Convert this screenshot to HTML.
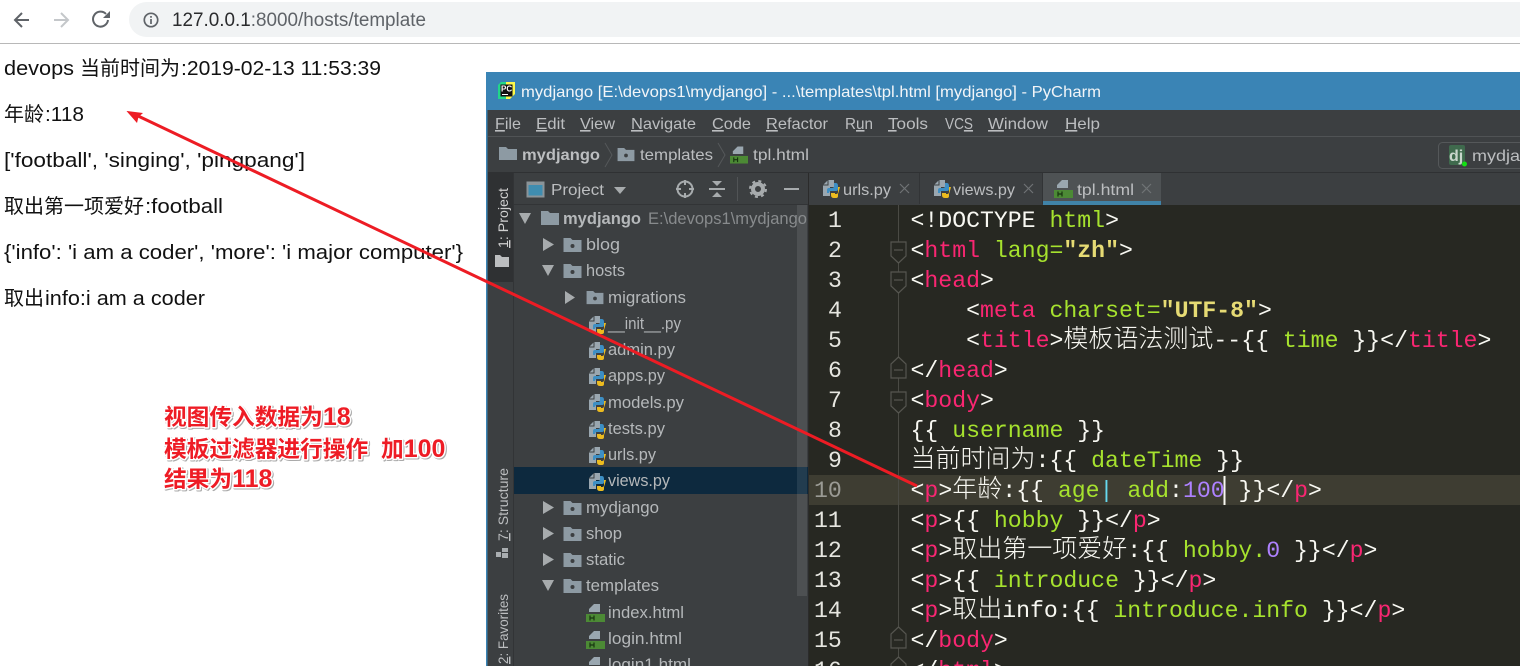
<!DOCTYPE html>
<html lang="zh"><head><meta charset="utf-8"><title>template</title>
<style>
html,body{margin:0;padding:0;background:#fff;width:1520px;height:666px;overflow:hidden}
svg{display:block}
text{white-space:pre}
.b{font:20px "Liberation Sans","Noto Sans CJK SC",sans-serif;fill:#111}
.c{font:20px "Noto Sans CJK SC","Liberation Sans",sans-serif;fill:#111}
.u{font:16px "Liberation Sans","Noto Sans CJK SC",sans-serif;fill:#bcbec0}
.t{font:17px "Liberation Sans",sans-serif;fill:#b5b8ba}
.m{font:23.17px "Liberation Mono","Noto Sans CJK SC",monospace;fill:#f8f8f2}
.m .k{font-size:25px;font-family:"Noto Sans CJK SC",sans-serif;font-weight:300}
.p{fill:#f92672}.g{fill:#a6e22e}.y{fill:#e6db74;font-weight:bold}.v{fill:#ae81ff}.a{fill:#66d9ef}
.n{font:23.17px "Liberation Mono",monospace;fill:#e6e6e0}
.r{font:bold 22.7px "Noto Sans CJK SC","Liberation Sans",sans-serif;fill:#ee1c25;stroke:#fff;stroke-width:3px;paint-order:stroke;stroke-linejoin:round;filter:drop-shadow(1px 1px 0 #aaa)}
.r .d{font:bold 25px "Liberation Sans",sans-serif}
.s{font:14px "Liberation Sans",sans-serif;fill:#bcbec0}
</style></head><body>
<svg width="1520" height="666" viewBox="0 0 1520 666" xmlns="http://www.w3.org/2000/svg">
<defs>
<symbol id="py" viewBox="0 0 18 20"><path d="M1 6 6 1h6v7H8v9H1z" fill="#9aa7b0"/><path d="M6 1v5H1" fill="none" stroke="#3c3f41"/><path d="M6 13v-3q0-2 2-2h3q2 0 2-2V3h2q2 0 2 3v3q0 2-2 2h-5q-2 0-2 2z" transform="translate(-1 1)" fill="#3d8fc4"/><path d="M17 9v5q0 2-2 2h-1v-1H10v2q0 3 3 3h2q2 0 2-2v-2q1-3 2-7z" transform="translate(-1 -1)" fill="#ecbb1f"/></symbol>
<symbol id="ht" viewBox="0 0 19 20"><path d="M3 9V6l5-5h6v8z" fill="#9aa7b0"/><rect x="0" y="11" width="19" height="8" fill="#4c8a35"/><path d="M4 12.5v5M8 12.5v5M4 15h4" stroke="#173510" stroke-width="1.2"/></symbol>
<symbol id="fo" viewBox="0 0 18 16"><path d="M0 1h7l2 2h9v12H0z" fill="#8d9aa3"/><circle cx="9" cy="9" r="2" fill="#3c3f41"/></symbol>
</defs>

<rect x="0" y="0" width="1520" height="43" fill="#fff"/>
<rect x="0" y="43" width="1520" height="1" fill="#b8b8b8"/>
<path d="M129 19.5A17.5 17.5 0 0 1 146.5 2H1520V37H146.5A17.5 17.5 0 0 1 129 19.5z" fill="#f1f3f4"/>
<path d="M29 20H15M22 13l-7 7 7 7" fill="none" stroke="#5f6368" stroke-width="2"/>
<path d="M54 20h14M61 13l7 7-7 7" fill="none" stroke="#c4c7ca" stroke-width="2"/>
<path d="M108 20a7.500 7.500 0 1 1-2-6" fill="none" stroke="#5f6368" stroke-width="2"/><path d="M110 11v7h-7z" fill="#5f6368"/>
<circle cx="151" cy="20" r="6.700" fill="none" stroke="#5f6368" stroke-width="1.700"/><path d="M151 19v5M151 16v1.700" stroke="#5f6368" stroke-width="1.700"/>
<text x="172" y="26" font-family="Liberation Sans" font-size="19" fill="#5f6368" textLength="254" lengthAdjust="spacingAndGlyphs"><tspan fill="#2a2b2d">127.0.0.1</tspan>:8000/hosts/template</text>

<text class="b" x="4" y="75" textLength="70" lengthAdjust="spacingAndGlyphs">devops</text>
<text class="c" x="80" y="75">当前时间为</text>
<text class="b" x="181" y="75" textLength="200" lengthAdjust="spacingAndGlyphs">:2019-02-13 11:53:39</text>
<text class="c" x="4" y="121">年龄</text><text class="b" x="45" y="121" textLength="39" lengthAdjust="spacingAndGlyphs">:118</text>
<text class="b" x="4" y="167" textLength="301" lengthAdjust="spacingAndGlyphs">['football', 'singing', 'pingpang']</text>
<text class="c" x="4" y="213">取出第一项爱好</text><text class="b" x="145" y="213" textLength="78" lengthAdjust="spacingAndGlyphs">:football</text>
<text class="b" x="4" y="259" textLength="459" lengthAdjust="spacingAndGlyphs">{'info': 'i am a coder', 'more': 'i major computer'}</text>
<text class="c" x="4" y="305">取出</text><text class="b" x="45" y="305" textLength="160" lengthAdjust="spacingAndGlyphs">info:i am a coder</text>

<text class="r" x="164" y="425">视图传入数据为<tspan class="d">18</tspan></text>
<text class="r" x="164" y="457">模板过滤器进行操作<tspan x="381">加</tspan><tspan class="d">100</tspan></text>
<text class="r" x="164" y="487">结果为<tspan class="d">118</tspan></text>

<rect x="486" y="72" width="1034" height="594" fill="#3c3f41"/>
<rect x="486" y="72" width="1034" height="38" fill="#3a84b5"/>
<rect x="486" y="72" width="1.500" height="594" fill="#3a84b5"/>
<path d="M498 85l3-3h9v17h-12z" fill="#21d789"/><path d="M506 82h9v12l-5 5h-4z" fill="#fcf84a"/><rect x="500.500" y="84.500" width="12" height="12" fill="#111"/>
<text x="501" y="91.500" font-family="Liberation Sans" font-weight="bold" font-size="8" fill="#fff">PC</text><rect x="502" y="94" width="6" height="1" fill="#fff"/>
<text x="521" y="97" font-family="Liberation Sans" font-size="16" fill="#f2f5f8" textLength="580" lengthAdjust="spacingAndGlyphs">mydjango [E:\devops1\mydjango] - ...\templates\tpl.html [mydjango] - PyCharm</text>

<rect x="488" y="136" width="1032" height="1" fill="#505355"/>
<g class="menu">
<text class="u" x="495" y="129" textLength="26" lengthAdjust="spacingAndGlyphs"><tspan text-decoration="underline">F</tspan>ile</text>
<text class="u" x="536" y="129" textLength="29" lengthAdjust="spacingAndGlyphs"><tspan text-decoration="underline">E</tspan>dit</text>
<text class="u" x="580" y="129" textLength="35" lengthAdjust="spacingAndGlyphs"><tspan text-decoration="underline">V</tspan>iew</text>
<text class="u" x="631" y="129" textLength="65" lengthAdjust="spacingAndGlyphs"><tspan text-decoration="underline">N</tspan>avigate</text>
<text class="u" x="712" y="129" textLength="39" lengthAdjust="spacingAndGlyphs"><tspan text-decoration="underline">C</tspan>ode</text>
<text class="u" x="766" y="129" textLength="62" lengthAdjust="spacingAndGlyphs"><tspan text-decoration="underline">R</tspan>efactor</text>
<text class="u" x="845" y="129" textLength="28" lengthAdjust="spacingAndGlyphs">R<tspan text-decoration="underline">u</tspan>n</text>
<text class="u" x="888" y="129" textLength="40" lengthAdjust="spacingAndGlyphs"><tspan text-decoration="underline">T</tspan>ools</text>
<text class="u" x="945" y="129" textLength="28" lengthAdjust="spacingAndGlyphs">VC<tspan text-decoration="underline">S</tspan></text>
<text class="u" x="988" y="129" textLength="60" lengthAdjust="spacingAndGlyphs"><tspan text-decoration="underline">W</tspan>indow</text>
<text class="u" x="1065" y="129" textLength="35" lengthAdjust="spacingAndGlyphs"><tspan text-decoration="underline">H</tspan>elp</text>
</g>

<path d="M499 147h7l2 2h9v11h-18z" fill="#8d9aa3"/>
<text class="u" x="522" y="160" style="font-weight:bold" textLength="78" lengthAdjust="spacingAndGlyphs">mydjango</text>
<path d="M605 143l7 12-7 12" fill="none" stroke="#55585a"/>
<use href="#fo" x="617" y="147" width="18" height="15"/>
<text class="u" x="640" y="160" textLength="73" lengthAdjust="spacingAndGlyphs">templates</text>
<path d="M718 143l7 12-7 12" fill="none" stroke="#55585a"/>
<use href="#ht" x="730" y="145" width="18" height="20"/>
<text class="u" x="753" y="160" textLength="56" lengthAdjust="spacingAndGlyphs">tpl.html</text>
<rect x="1438.500" y="142.500" width="100" height="26" rx="4" fill="none" stroke="#55585a"/>
<rect x="1449" y="145" width="16" height="20" rx="2" fill="#3f6a4d"/><text x="1449" y="161" font-family="Liberation Sans" font-weight="bold" font-size="16" fill="#c9d6cc">dj</text><circle cx="1464.500" cy="164" r="2.500" fill="#13e013"/>
<text class="u" x="1472" y="161" textLength="58" lengthAdjust="spacingAndGlyphs">mydjan</text>

<rect x="488" y="172" width="1032" height="1" fill="#2f3133"/>

<rect x="488" y="173" width="25.500" height="109" fill="#2f3133"/>
<rect x="513" y="173" width="1" height="493" fill="#323436"/>
<text class="s" transform="translate(508 248) rotate(-90)" style="fill:#d0d0d0" textLength="60" lengthAdjust="spacingAndGlyphs"><tspan text-decoration="underline">1</tspan>: Project</text>
<path d="M495 255h5l2 2h7v10h-14z" fill="#bcbec0"/>
<text class="s" transform="translate(508 541) rotate(-90)" textLength="73" lengthAdjust="spacingAndGlyphs"><tspan text-decoration="underline">7</tspan>: Structure</text>
<path d="M496 552h5v5h-5zM502 548h6v4h-6zM502 553h6v5h-6z" fill="#a9adb0"/>
<text class="s" transform="translate(508 664) rotate(-90)" textLength="70" lengthAdjust="spacingAndGlyphs"><tspan text-decoration="underline">2</tspan>: Favorites</text>

<rect x="527.500" y="182.500" width="16" height="14" fill="#3f8db0" stroke="#8b9499" stroke-width="2"/><rect x="528" y="182" width="16" height="3" fill="#8b9499"/>
<text class="u" x="551" y="195" textLength="53" lengthAdjust="spacingAndGlyphs">Project</text>
<path d="M614 187h12l-6 7z" fill="#a7abad"/>
<circle cx="685" cy="189" r="7.500" fill="none" stroke="#a7abad" stroke-width="2"/><path d="M676 189h5M689 189h5M685 180v5M685 193v5" stroke="#a7abad" stroke-width="2"/>
<path d="M709 189h16" stroke="#a7abad" stroke-width="2"/><path d="M712 181h10l-5 5zM712 197h10l-5-5z" fill="#a7abad"/>
<rect x="737" y="177" width="1" height="24" fill="#515456"/>
<circle cx="758" cy="189" r="5" fill="none" stroke="#a7abad" stroke-width="4"/><circle cx="758" cy="189" r="8" fill="none" stroke="#a7abad" stroke-width="2" stroke-dasharray="3 3.300"/>
<path d="M784 189h15" stroke="#a7abad" stroke-width="2"/>

<rect x="514" y="204" width="295" height="1" fill="#323436"/>
<rect x="514" y="467" width="294" height="27" fill="#0d293e"/>
<rect x="797" y="205" width="10" height="391" fill="#ffffff" fill-opacity=".09"/>

<path d="M519 213h12l-6 11zM542 265h12l-6 11zM542 580h12l-6 11z" fill="#a7abad"/>
<path d="M543 238l11 6.500-11 6.500zM543 501l11 6.500-11 6.500zM543 527l11 6.500-11 6.500zM543 553l11 6.500-11 6.500zM565 291l10 6.500-10 6.500z" fill="#a7abad"/>
<path d="M541 211h7l2 2h9v12h-18z" fill="#8d9aa3"/>
<use href="#fo" x="563" y="237" width="19" height="16"/><use href="#fo" x="563" y="263" width="19" height="16"/><use href="#fo" x="586" y="290" width="18" height="15"/>
<use href="#fo" x="563" y="500" width="19" height="16"/><use href="#fo" x="563" y="526" width="19" height="16"/><use href="#fo" x="563" y="552" width="19" height="16"/><use href="#fo" x="563" y="578" width="19" height="16"/>
<use href="#py" x="588" y="315" width="18" height="20"/><use href="#py" x="588" y="341" width="18" height="20"/><use href="#py" x="588" y="367" width="18" height="20"/><use href="#py" x="588" y="393" width="18" height="20"/><use href="#py" x="588" y="420" width="18" height="20"/><use href="#py" x="588" y="446" width="18" height="20"/><use href="#py" x="588" y="472" width="18" height="20"/>
<use href="#ht" x="586" y="603" width="19" height="20"/><use href="#ht" x="586" y="630" width="19" height="20"/><use href="#ht" x="586" y="656" width="19" height="20"/>

<text class="t" x="563" y="224" style="font-weight:bold" textLength="78" lengthAdjust="spacingAndGlyphs">mydjango</text>
<text class="t" x="648" y="224" style="fill:#888b8d" textLength="159" lengthAdjust="spacingAndGlyphs">E:\devops1\mydjango</text>
<text class="t" x="586" y="250" textLength="34" lengthAdjust="spacingAndGlyphs">blog</text>
<text class="t" x="586" y="276" textLength="39" lengthAdjust="spacingAndGlyphs">hosts</text>
<text class="t" x="608" y="303" textLength="78" lengthAdjust="spacingAndGlyphs">migrations</text>
<text class="t" x="608" y="329" textLength="73" lengthAdjust="spacingAndGlyphs">__init__.py</text>
<text class="t" x="608" y="355" textLength="67" lengthAdjust="spacingAndGlyphs">admin.py</text>
<text class="t" x="608" y="381" textLength="57" lengthAdjust="spacingAndGlyphs">apps.py</text>
<text class="t" x="608" y="408" textLength="76" lengthAdjust="spacingAndGlyphs">models.py</text>
<text class="t" x="608" y="434" textLength="57" lengthAdjust="spacingAndGlyphs">tests.py</text>
<text class="t" x="608" y="460" textLength="48" lengthAdjust="spacingAndGlyphs">urls.py</text>
<text class="t" x="608" y="486" textLength="62" lengthAdjust="spacingAndGlyphs">views.py</text>
<text class="t" x="586" y="513" textLength="73" lengthAdjust="spacingAndGlyphs">mydjango</text>
<text class="t" x="586" y="539" textLength="36" lengthAdjust="spacingAndGlyphs">shop</text>
<text class="t" x="586" y="565" textLength="39" lengthAdjust="spacingAndGlyphs">static</text>
<text class="t" x="586" y="591" textLength="73" lengthAdjust="spacingAndGlyphs">templates</text>
<text class="t" x="608" y="618" textLength="76" lengthAdjust="spacingAndGlyphs">index.html</text>
<text class="t" x="608" y="644" textLength="74" lengthAdjust="spacingAndGlyphs">login.html</text>
<text class="t" x="608" y="670" textLength="83" lengthAdjust="spacingAndGlyphs">login1.html</text>

<rect x="809" y="173" width="711" height="32" fill="#3c3f41"/>
<rect x="919" y="173" width="1" height="31" fill="#323436"/><rect x="1042" y="173" width="1" height="31" fill="#323436"/>
<rect x="1043" y="173" width="118" height="28" fill="#4e5254"/><rect x="1043" y="201" width="118" height="4" fill="#4083a8"/>
<use href="#py" x="822" y="179" width="18" height="20"/><use href="#py" x="933" y="179" width="18" height="20"/><use href="#ht" x="1054" y="179" width="19" height="20"/>
<text class="u" x="843" y="195" textLength="48" lengthAdjust="spacingAndGlyphs">urls.py</text>
<text class="u" x="953" y="195" textLength="62" lengthAdjust="spacingAndGlyphs">views.py</text>
<text class="u" x="1077" y="195" textLength="57" lengthAdjust="spacingAndGlyphs">tpl.html</text>
<path d="M900 184l9 9M909 184l-9 9M1024 184l9 9M1033 184l-9 9M1142 184l9 9M1151 184l-9 9" stroke="#6f7375" stroke-width="1.200"/>

<rect x="809" y="205" width="711" height="461" fill="#272822"/>
<rect x="808" y="173" width="1" height="493" fill="#2b2b2b"/>
<rect x="809" y="475" width="711" height="30" fill="#3e3d32"/>
<rect x="898" y="205" width="1" height="461" fill="#4a4a44"/>
<g fill="#272822" stroke="#55554f" stroke-width="1.200">
<path d="M891 242h15v14l-7.500 7-7.500-7z"/><path d="M891 272h15v14l-7.500 7-7.500-7z"/><path d="M906 378h-15v-14l7.500-7 7.500 7z"/><path d="M891 392h15v14l-7.500 7-7.500-7z"/><path d="M906 648h-15v-14l7.500-7 7.500 7z"/><path d="M906 678h-15v-14l7.500-7 7.500 7z"/>
</g>
<path d="M894 250h9M894 280h9M894 370h9M894 400h9M894 640h9" stroke="#55554f" stroke-width="1.200"/>

<text class="n" x="828" y="227">1</text><text class="n" x="828" y="257">2</text><text class="n" x="828" y="287">3</text><text class="n" x="828" y="317">4</text><text class="n" x="828" y="347">5</text><text class="n" x="828" y="377">6</text><text class="n" x="828" y="407">7</text><text class="n" x="828" y="437">8</text><text class="n" x="828" y="467">9</text>
<text class="n" x="814" y="497" style="fill:#9a9a94">10</text><text class="n" x="814" y="527">11</text><text class="n" x="814" y="557">12</text><text class="n" x="814" y="587">13</text><text class="n" x="814" y="617">14</text><text class="n" x="814" y="647">15</text><text class="n" x="814" y="677">16</text>

<text class="m" x="910.500" y="227">&lt;!DOCTYPE <tspan class="g">html</tspan>&gt;</text>
<text class="m" x="910.500" y="257">&lt;<tspan class="p">html</tspan> <tspan class="g">lang=</tspan><tspan class="y">"zh"</tspan>&gt;</text>
<text class="m" x="910.500" y="287">&lt;<tspan class="p">head</tspan>&gt;</text>
<text class="m" x="966.100" y="317">&lt;<tspan class="p">meta</tspan> <tspan class="g">charset=</tspan><tspan class="y">"UTF-8"</tspan>&gt;</text>
<text class="m" x="966.100" y="347">&lt;<tspan class="p">title</tspan>&gt;<tspan class="k">模板语法测试</tspan>--{{ <tspan class="g">time</tspan> }}&lt;/<tspan class="p">title</tspan>&gt;</text>
<text class="m" x="910.500" y="377">&lt;/<tspan class="p">head</tspan>&gt;</text>
<text class="m" x="910.500" y="407">&lt;<tspan class="p">body</tspan>&gt;</text>
<text class="m" x="910.500" y="437">{{ <tspan class="g">username</tspan> }}</text>
<text class="m" x="910.500" y="467"><tspan class="k">当前时间为</tspan>:{{ <tspan class="g">dateTime</tspan> }}</text>
<text class="m" x="910.500" y="497">&lt;<tspan class="p">p</tspan>&gt;<tspan class="k">年龄</tspan>:{{ <tspan class="g">age</tspan><tspan class="a">|</tspan> <tspan class="g">add</tspan>:<tspan class="v">100</tspan> }}&lt;/<tspan class="p">p</tspan>&gt;</text>
<rect x="1223.500" y="476" width="2" height="29" fill="#f8f8f2"/>
<text class="m" x="910.500" y="527">&lt;<tspan class="p">p</tspan>&gt;{{ <tspan class="g">hobby</tspan> }}&lt;/<tspan class="p">p</tspan>&gt;</text>
<text class="m" x="910.500" y="557">&lt;<tspan class="p">p</tspan>&gt;<tspan class="k">取出第一项爱好</tspan>:{{ <tspan class="g">hobby.</tspan><tspan class="v">0</tspan> }}&lt;/<tspan class="p">p</tspan>&gt;</text>
<text class="m" x="910.500" y="587">&lt;<tspan class="p">p</tspan>&gt;{{ <tspan class="g">introduce</tspan> }}&lt;/<tspan class="p">p</tspan>&gt;</text>
<text class="m" x="910.500" y="617">&lt;<tspan class="p">p</tspan>&gt;<tspan class="k">取出</tspan>info:{{ <tspan class="g">introduce.info</tspan> }}&lt;/<tspan class="p">p</tspan>&gt;</text>
<text class="m" x="910.500" y="647">&lt;/<tspan class="p">body</tspan>&gt;</text>
<text class="m" x="910.500" y="677">&lt;/<tspan class="p">html</tspan>&gt;</text>

<path d="M136 115 917 486" stroke="#ed1c24" stroke-width="3" fill="none"/>
<path d="M126.500 111 143 113 138.500 117 137 123z" fill="#ed1c24"/>
</svg>
</body></html>
